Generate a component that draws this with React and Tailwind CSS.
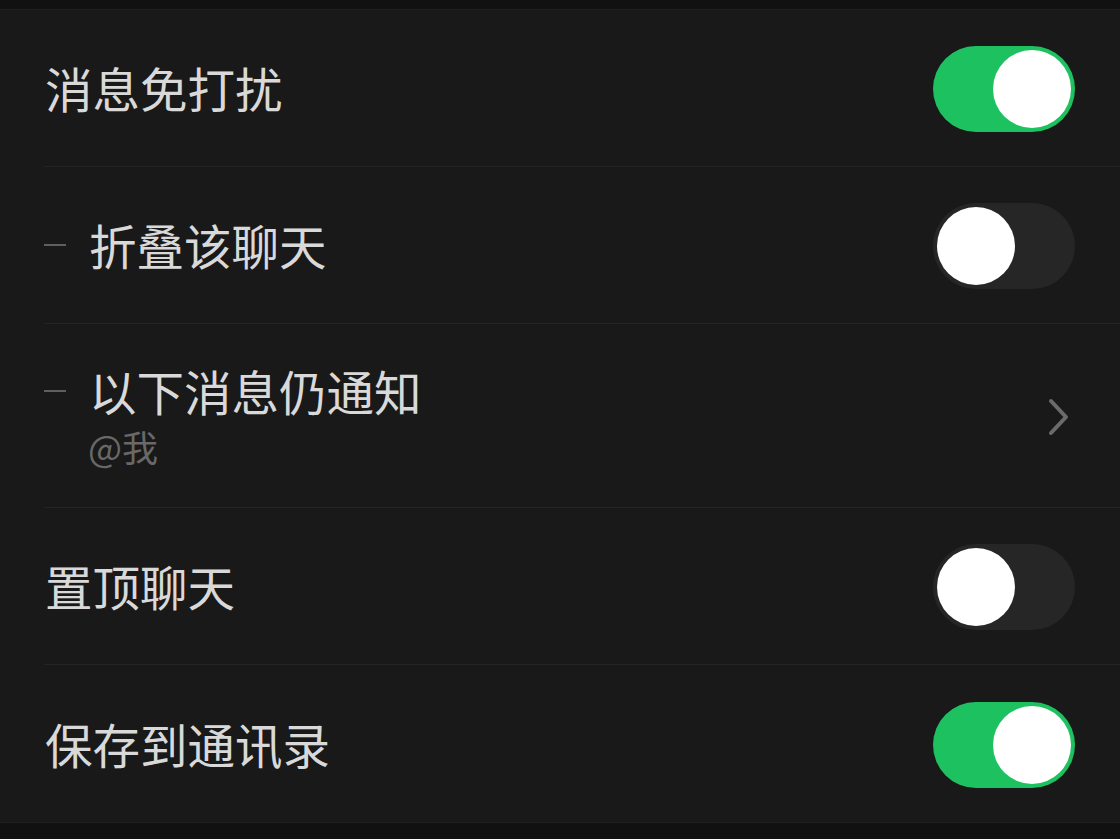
const font = { fontFamily: '"Noto Sans CJK SC", "Noto Sans", sans-serif' }

function Toggle({ on }) {
  return (
    <div
      className={
        'relative mt-[2px] h-[86px] w-[142px] shrink-0 rounded-full ' +
        (on ? 'bg-[#1ec15f]' : 'bg-[#262626]')
      }
    >
      <div
        className={
          'absolute top-[4px] h-[78px] w-[78px] rounded-full bg-white ' +
          (on ? 'right-[4px]' : 'left-[4px]')
        }
      />
    </div>
  )
}

function Dash() {
  return <span className="mr-[23px] h-[2px] w-[22px] shrink-0 bg-[#5f5f5f]" />
}

function Row({ children, right, tall, last }) {
  return (
    <div
      className={
        'flex items-center justify-between pr-[45px] ' +
        (tall ? 'h-[184px] ' : 'h-[157px] ') +
        (last ? '' : 'border-b border-[#242424]')
      }
    >
      {children}
      {right}
    </div>
  )
}

const title = 'text-[47.5px] leading-[58px] text-[#d9d9d9]'

export default function App() {
  return (
    <div className="flex h-[839px] w-[1120px] flex-col bg-[#111111]" style={font}>
      <div className="h-[10px] shrink-0 border-b border-[#1f1f1f]" />
      <div className="bg-[#191919] pl-[44px]">
        <Row right={<Toggle on />}>
          <span className={'ml-[1px] ' + title}>消息免打扰</span>
        </Row>
        <Row right={<Toggle />}>
          <div className="flex items-center">
            <Dash />
            <span className={title}>折叠该聊天</span>
          </div>
        </Row>
        <Row
          tall
          right={
            <svg width="24" height="40" viewBox="0 0 24 40" className="mr-[4px] mt-[2px]">
              <path d="M4 4 L19 20 L4 36" fill="none" stroke="#6b6b6b" strokeWidth="4" strokeLinecap="round" strokeLinejoin="round" />
            </svg>
          }
        >
          <div className="flex flex-col">
            <div className="flex items-center">
              <Dash />
              <span className={title}>以下消息仍通知</span>
            </div>
            <span className="ml-[44px] mt-[2px] text-[36px] leading-[48px] text-[#686868]">@我</span>
          </div>
        </Row>
        <Row right={<Toggle />}>
          <span className={'ml-[1px] ' + title}>置顶聊天</span>
        </Row>
        <Row last right={<Toggle on />}>
          <span className={'ml-[1px] ' + title}>保存到通讯录</span>
        </Row>
      </div>
      <div className="flex-1 border-t border-[#1f1f1f]" />
    </div>
  )
}
